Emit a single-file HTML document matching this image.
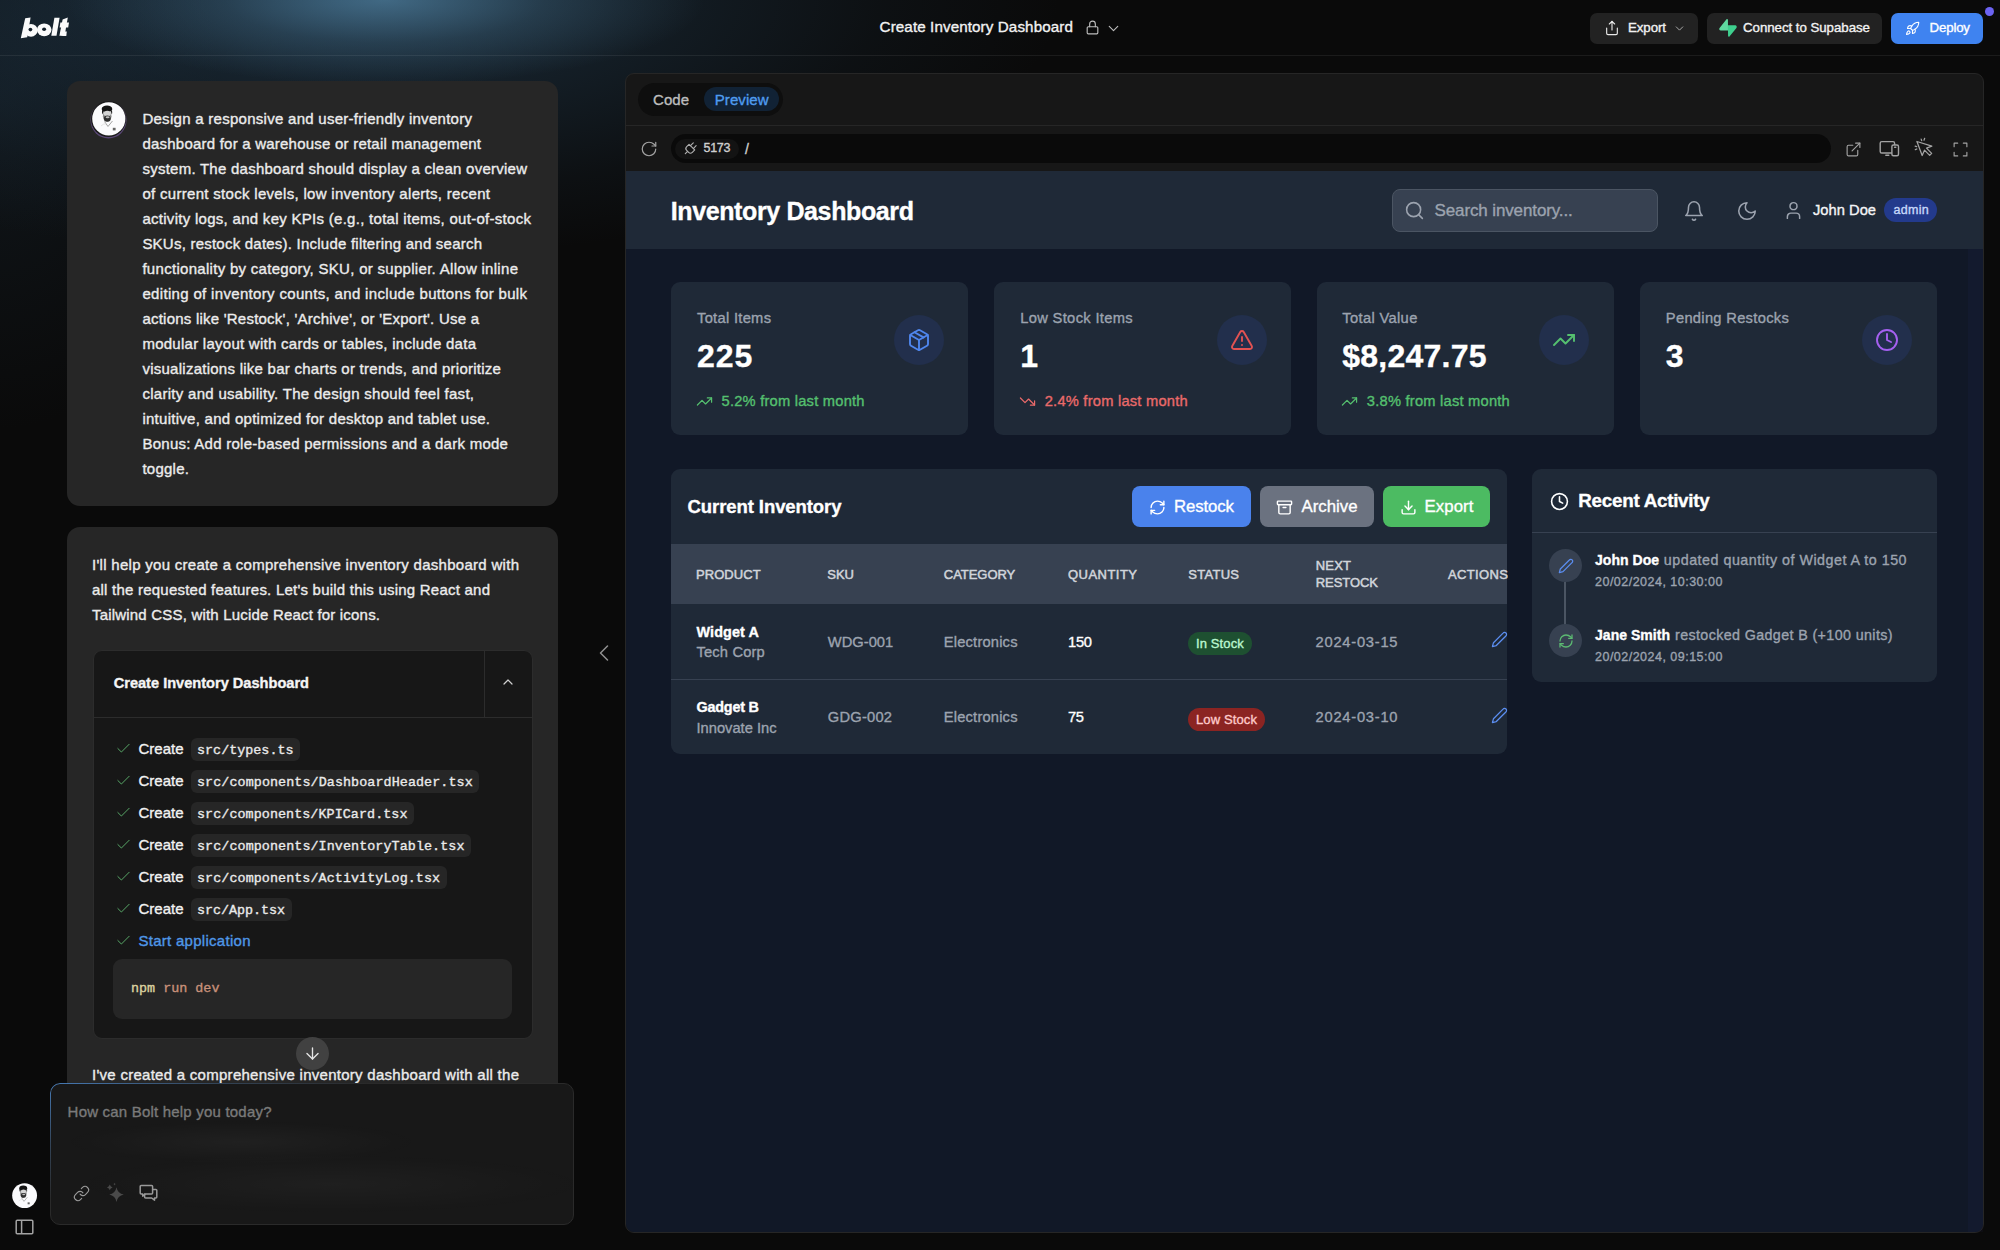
<!DOCTYPE html>
<html><head><meta charset="utf-8">
<title>Create Inventory Dashboard</title>
<style>
*{box-sizing:border-box;margin:0;padding:0}
html,body{width:2000px;height:1250px;overflow:hidden}
body{background:#0a0a0a;font-family:"Liberation Sans",sans-serif;color:#fff;position:relative}
.bx{position:absolute}
.t{position:absolute;line-height:1;white-space:pre}
.ic{position:absolute;overflow:visible}
#glow{position:absolute;left:0;top:0;width:2000px;height:1250px;
 background:
  radial-gradient(ellipse 320px 85px at 385px 0px, rgba(90,145,180,0.6), rgba(90,145,180,0.22) 50%, rgba(90,145,180,0) 100%),
  radial-gradient(ellipse 720px 260px at 340px 0px, rgba(40,72,98,0.6), rgba(40,72,98,0.32) 40%, rgba(40,72,98,0.1) 75%, rgba(40,72,98,0) 100%),
  radial-gradient(ellipse 220px 330px at 0px 100px, rgba(30,50,66,0.3), rgba(30,50,66,0) 100%);}
.t{-webkit-text-stroke:0.35px currentColor}
</style></head><body>
<div id="glow"></div>
<div class="bx" style="left:0px;top:55px;width:2000px;height:1px;background:rgba(255,255,255,0.07)"></div>
<div class="bx" style="left:1590px;top:12.5px;width:108px;height:31.0px;background:#222222;border-radius:7px"></div>
<div class="bx" style="left:1707px;top:12.5px;width:175.29999999999995px;height:31.0px;background:#222222;border-radius:7px"></div>
<div class="bx" style="left:1891px;top:12.5px;width:92px;height:31.0px;background:#3f83f0;border-radius:7px"></div>
<div class="bx" style="left:1984.5px;top:6.5px;width:9.0px;height:9.0px;background:#6c63f2;border-radius:50%"></div>
<div class="bx" style="left:66.5px;top:81px;width:491.5px;height:425px;background:#262626;border-radius:13px"></div>
<div class="bx" style="left:91px;top:101px;width:35px;height:35.5px;border-radius:50%;background:#1a1a1a;box-shadow:0 1px 0 0.5px rgba(150,110,210,0.45)"></div>
<div class="bx" style="left:66.5px;top:527px;width:491.5px;height:633px;background:#262626;border-radius:13px"></div>
<div class="bx" style="left:92.5px;top:650px;width:440.5px;height:388.5px;background:#171717;border:1px solid #2c2c2c;border-radius:9px"></div>
<div class="bx" style="left:93.5px;top:716.5px;width:438.5px;height:1.0px;background:#2c2c2c"></div>
<div class="bx" style="left:484px;top:651px;width:1px;height:65.5px;background:#2c2c2c"></div>
<div class="bx" style="left:191px;top:737.5px;width:109px;height:23.0px;background:#262626;border-radius:6px"></div>
<div class="bx" style="left:191px;top:769.5px;width:288.2px;height:23.0px;background:#262626;border-radius:6px"></div>
<div class="bx" style="left:191px;top:801.5px;width:223px;height:23.0px;background:#262626;border-radius:6px"></div>
<div class="bx" style="left:191px;top:833.5px;width:280px;height:23.0px;background:#262626;border-radius:6px"></div>
<div class="bx" style="left:191px;top:865.5px;width:255.60000000000002px;height:23.0px;background:#262626;border-radius:6px"></div>
<div class="bx" style="left:191px;top:897.5px;width:100.60000000000002px;height:23.0px;background:#262626;border-radius:6px"></div>
<div class="bx" style="left:113.2px;top:959.3px;width:398.7px;height:59.30000000000007px;background:#262626;border-radius:9px"></div>
<div class="bx" style="left:296px;top:1037px;width:33px;height:33px;background:#414141;border-radius:50%;z-index:3"></div>
<div class="bx" style="left:50.2px;top:1083px;width:524.1999999999999px;height:141.5999999999999px;background:#181818;border:1px solid #2a2a2a;border-radius:10px;z-index:5;overflow:hidden"></div>
<div class="bx" style="left:51px;top:1084px;width:522px;height:140px;z-index:5;border-radius:10px;background:radial-gradient(ellipse 180px 22px at 190px 58px, rgba(255,255,255,0.035), transparent), radial-gradient(ellipse 260px 30px at 280px 100px, rgba(255,255,255,0.03), transparent)"></div>
<div class="bx" style="left:50.2px;top:1083px;width:524.1999999999999px;height:141.5999999999999px;z-index:6;border-radius:10px;border:1px solid transparent;background:linear-gradient(160deg, rgba(80,150,230,0.75), rgba(80,150,230,0.25) 18%, rgba(80,150,230,0) 35%) border-box;-webkit-mask:linear-gradient(#000 0 0) padding-box, linear-gradient(#000 0 0);-webkit-mask-composite:xor;mask-composite:exclude"></div>
<div class="bx" style="left:625px;top:73px;width:1359px;height:1160px;background:#171717;border:1px solid #262626;border-radius:9px"></div>
<div class="bx" style="left:626px;top:125px;width:1357px;height:1px;background:#262626"></div>
<div class="bx" style="left:638.4px;top:82.7px;width:144.89999999999998px;height:32.89999999999999px;background:#0e0e0e;border-radius:17px"></div>
<div class="bx" style="left:704.3px;top:86.9px;width:75.20000000000005px;height:24.5px;background:#112235;border-radius:13px"></div>
<div class="bx" style="left:670.7px;top:134px;width:1160.3px;height:28.5px;background:#0a0a0a;border-radius:15px"></div>
<div class="bx" style="left:674.5px;top:138.7px;width:64.0px;height:20.0px;background:#131313;border-radius:10px"></div>
<div class="bx" style="left:626px;top:171.3px;width:1357px;height:1060.7px;background:#111827;border-radius:0 0 8px 8px"></div>
<div class="bx" style="left:1968px;top:248.6px;width:14.5px;height:983.4px;background:rgba(60,50,140,0.07)"></div>
<div class="bx" style="left:626px;top:171.3px;width:1357px;height:77.29999999999998px;background:#1f2937"></div>
<div class="bx" style="left:1391.8px;top:189.2px;width:266.20000000000005px;height:42.60000000000002px;background:#374151;border:1px solid #4b5563;border-radius:8px"></div>
<div class="bx" style="left:1884.2px;top:198.3px;width:52.899999999999864px;height:24.19999999999999px;background:#233a8c;border-radius:12px"></div>
<div class="bx" style="left:671.2px;top:282.2px;width:297.0px;height:153.2px;background:#1f2937;border-radius:9px"></div>
<div class="bx" style="left:893.6px;top:314.8px;width:50.0px;height:50.0px;background:#222f4c;border-radius:50%"></div>
<div class="bx" style="left:994.4px;top:282.2px;width:296.6px;height:153.2px;background:#1f2937;border-radius:9px"></div>
<div class="bx" style="left:1216.8px;top:314.8px;width:50.0px;height:50.0px;background:#222f4c;border-radius:50%"></div>
<div class="bx" style="left:1316.5px;top:282.2px;width:297.70000000000005px;height:153.2px;background:#1f2937;border-radius:9px"></div>
<div class="bx" style="left:1538.9px;top:314.8px;width:50.0px;height:50.0px;background:#222f4c;border-radius:50%"></div>
<div class="bx" style="left:1640px;top:282.2px;width:297px;height:153.2px;background:#1f2937;border-radius:9px"></div>
<div class="bx" style="left:1862.4px;top:314.8px;width:50.0px;height:50.0px;background:#222f4c;border-radius:50%"></div>
<div class="bx" style="left:671px;top:469.2px;width:835.8px;height:284.8px;background:#1f2937;border-radius:9px;overflow:hidden"></div>
<div class="bx" style="left:1131.9px;top:486.2px;width:119.29999999999995px;height:41.099999999999966px;background:#4a82ec;border-radius:8px"></div>
<div class="bx" style="left:1260px;top:486.2px;width:114px;height:41.099999999999966px;background:#6b7280;border-radius:8px"></div>
<div class="bx" style="left:1382.9px;top:486.2px;width:107.09999999999991px;height:41.099999999999966px;background:#4cbb62;border-radius:8px"></div>
<div class="bx" style="left:671px;top:544.3px;width:835.8px;height:59.700000000000045px;background:#374151"></div>
<div class="bx" style="left:671px;top:679px;width:835.8px;height:1px;background:#374151"></div>
<div class="bx" style="left:1188px;top:631.9px;width:63.799999999999955px;height:23.100000000000023px;background:#1e5031;border-radius:12px"></div>
<div class="bx" style="left:1188px;top:707.5px;width:77px;height:23.100000000000023px;background:#8b2422;border-radius:12px"></div>
<div class="bx" style="left:1532.1px;top:469.2px;width:405.3000000000002px;height:213.00000000000006px;background:#1f2937;border-radius:9px"></div>
<div class="bx" style="left:1532.1px;top:531.5px;width:405.3000000000002px;height:1.0px;background:#374151"></div>
<div class="bx" style="left:1564px;top:582px;width:2.2000000000000455px;height:43px;background:#4b5563"></div>
<div class="bx" style="left:1548.6px;top:549.1px;width:33.0px;height:33.0px;background:#374151;border-radius:50%"></div>
<div class="bx" style="left:1548.6px;top:624.4px;width:33.0px;height:33.0px;background:#374151;border-radius:50%"></div>
<div class="t" style="left:879.6px;top:19.43px;font-size:15.2px;color:#f2f2f2;letter-spacing:0.1px;">Create Inventory Dashboard</div>
<div class="t" style="left:1628px;top:20.74px;font-size:13.3px;color:#f2f2f2;letter-spacing:-0.087px;">Export</div>
<div class="t" style="left:1743px;top:20.74px;font-size:13.3px;color:#f2f2f2;letter-spacing:-0.05px;">Connect to Supabase</div>
<div class="t" style="left:1929.6px;top:20.74px;font-size:13.3px;color:#ffffff;letter-spacing:-0.198px;">Deploy</div>
<div class="t" style="left:142.4px;top:110.9px;font-size:15px;color:#ececec;letter-spacing:0.277px;">Design a responsive and user-friendly inventory</div>
<div class="t" style="left:142.4px;top:135.9px;font-size:15px;color:#ececec;letter-spacing:0.224px;">dashboard for a warehouse or retail management</div>
<div class="t" style="left:142.4px;top:160.9px;font-size:15px;color:#ececec;letter-spacing:0.25px;">system. The dashboard should display a clean overview</div>
<div class="t" style="left:142.4px;top:185.9px;font-size:15px;color:#ececec;letter-spacing:0.304px;">of current stock levels, low inventory alerts, recent</div>
<div class="t" style="left:142.4px;top:210.9px;font-size:15px;color:#ececec;letter-spacing:0.284px;">activity logs, and key KPIs (e.g., total items, out-of-stock</div>
<div class="t" style="left:142.4px;top:235.9px;font-size:15px;color:#ececec;letter-spacing:0.227px;">SKUs, restock dates). Include filtering and search</div>
<div class="t" style="left:142.4px;top:260.9px;font-size:15px;color:#ececec;letter-spacing:0.295px;">functionality by category, SKU, or supplier. Allow inline</div>
<div class="t" style="left:142.4px;top:285.9px;font-size:15px;color:#ececec;letter-spacing:0.331px;">editing of inventory counts, and include buttons for bulk</div>
<div class="t" style="left:142.4px;top:310.9px;font-size:15px;color:#ececec;letter-spacing:0.227px;">actions like &#x27;Restock&#x27;, &#x27;Archive&#x27;, or &#x27;Export&#x27;. Use a</div>
<div class="t" style="left:142.4px;top:335.9px;font-size:15px;color:#ececec;letter-spacing:0.262px;">modular layout with cards or tables, include data</div>
<div class="t" style="left:142.4px;top:360.9px;font-size:15px;color:#ececec;letter-spacing:0.259px;">visualizations like bar charts or trends, and prioritize</div>
<div class="t" style="left:142.4px;top:385.9px;font-size:15px;color:#ececec;letter-spacing:0.29px;">clarity and usability. The design should feel fast,</div>
<div class="t" style="left:142.4px;top:410.9px;font-size:15px;color:#ececec;letter-spacing:0.276px;">intuitive, and optimized for desktop and tablet use.</div>
<div class="t" style="left:142.4px;top:435.9px;font-size:15px;color:#ececec;letter-spacing:0.268px;">Bonus: Add role-based permissions and a dark mode</div>
<div class="t" style="left:142.4px;top:460.9px;font-size:15px;color:#ececec;letter-spacing:0.259px;">toggle.</div>
<div class="t" style="left:92px;top:556.6px;font-size:15px;color:#ececec;letter-spacing:0.287px;">I&#x27;ll help you create a comprehensive inventory dashboard with</div>
<div class="t" style="left:92px;top:581.6px;font-size:15px;color:#ececec;letter-spacing:0.224px;">all the requested features. Let&#x27;s build this using React and</div>
<div class="t" style="left:92px;top:606.6px;font-size:15px;color:#ececec;letter-spacing:0.192px;">Tailwind CSS, with Lucide React for icons.</div>
<div class="t" style="left:113.7px;top:675.64px;font-size:14.6px;color:#f5f5f5;font-weight:700;letter-spacing:-0.006px;">Create Inventory Dashboard</div>
<div class="t" style="left:138.5px;top:741.3px;font-size:15px;color:#f2f2f2;letter-spacing:-0.006px;">Create</div>
<div class="t" style="left:197px;top:743.53px;font-size:13.4px;color:#eaeaea;font-family:'Liberation Mono',monospace;letter-spacing:0.006px;">src/types.ts</div>
<div class="t" style="left:138.5px;top:773.3px;font-size:15px;color:#f2f2f2;letter-spacing:-0.006px;">Create</div>
<div class="t" style="left:197px;top:775.53px;font-size:13.4px;color:#eaeaea;font-family:'Liberation Mono',monospace;letter-spacing:0.075px;">src/components/DashboardHeader.tsx</div>
<div class="t" style="left:138.5px;top:805.3px;font-size:15px;color:#f2f2f2;letter-spacing:-0.006px;">Create</div>
<div class="t" style="left:197px;top:807.53px;font-size:13.4px;color:#eaeaea;font-family:'Liberation Mono',monospace;letter-spacing:0.062px;">src/components/KPICard.tsx</div>
<div class="t" style="left:138.5px;top:837.3px;font-size:15px;color:#f2f2f2;letter-spacing:-0.006px;">Create</div>
<div class="t" style="left:197px;top:839.53px;font-size:13.4px;color:#eaeaea;font-family:'Liberation Mono',monospace;letter-spacing:0.072px;">src/components/InventoryTable.tsx</div>
<div class="t" style="left:138.5px;top:869.3px;font-size:15px;color:#f2f2f2;letter-spacing:-0.006px;">Create</div>
<div class="t" style="left:197px;top:871.53px;font-size:13.4px;color:#eaeaea;font-family:'Liberation Mono',monospace;letter-spacing:0.07px;">src/components/ActivityLog.tsx</div>
<div class="t" style="left:138.5px;top:901.3px;font-size:15px;color:#f2f2f2;letter-spacing:-0.006px;">Create</div>
<div class="t" style="left:197px;top:903.53px;font-size:13.4px;color:#eaeaea;font-family:'Liberation Mono',monospace;letter-spacing:-0.031px;">src/App.tsx</div>
<div class="t" style="left:138.5px;top:933.3px;font-size:15px;color:#4f97e8;letter-spacing:0.276px;">Start application</div>
<div class="t" style="left:130.9px;top:982.33px;font-size:13.4px;color:#dcd3a0;font-family:'Liberation Mono',monospace;">npm</div>
<div class="t" style="left:163.2px;top:982.33px;font-size:13.4px;color:#c8917a;font-family:'Liberation Mono',monospace;">run dev</div>
<div class="t" style="left:92px;top:1066.9px;font-size:15px;color:#ececec;letter-spacing:0.273px;">I&#x27;ve created a comprehensive inventory dashboard with all the</div>
<div class="t" style="left:67.6px;top:1103.6px;font-size:15px;color:#7a7a7a;letter-spacing:0.201px;z-index:6;">How can Bolt help you today?</div>
<div class="t" style="left:653px;top:91.5px;font-size:15px;color:#bdbdbd;letter-spacing:0.047px;">Code</div>
<div class="t" style="left:714.8px;top:91.5px;font-size:15px;color:#4f9cf0;letter-spacing:0.073px;">Preview</div>
<div class="t" style="left:703.5px;top:142.42px;font-size:12.5px;color:#cfcfcf;letter-spacing:-0.304px;">5173</div>
<div class="t" style="left:745px;top:142.15px;font-size:14px;color:#cfcfcf;">/</div>
<div class="t" style="left:670.7px;top:198.84px;font-size:25px;color:#ffffff;font-weight:700;letter-spacing:-0.376px;">Inventory Dashboard</div>
<div class="t" style="left:1434.5px;top:202.41px;font-size:17px;color:#9ca3af;letter-spacing:-0.121px;">Search inventory...</div>
<div class="t" style="left:1813px;top:203.36px;font-size:14.7px;color:#f3f4f6;letter-spacing:0.018px;">John Doe</div>
<div class="t" style="left:1893.6px;top:204.02px;font-size:12.5px;color:#c7d8fb;letter-spacing:0.263px;">admin</div>
<div class="t" style="left:697.0px;top:310.56px;font-size:14.7px;color:#9ca3af;letter-spacing:0.298px;">Total Items</div>
<div class="t" style="left:697.0px;top:339.91px;font-size:32px;color:#ffffff;font-weight:700;letter-spacing:0.905px;">225</div>
<div class="t" style="left:721.5px;top:393.56px;font-size:14.7px;color:#55c06f;letter-spacing:0.222px;">5.2% from last month</div>
<div class="t" style="left:1020.1999999999999px;top:310.56px;font-size:14.7px;color:#9ca3af;letter-spacing:0.339px;">Low Stock Items</div>
<div class="t" style="left:1020.1999999999999px;top:339.91px;font-size:32px;color:#ffffff;font-weight:700;">1</div>
<div class="t" style="left:1044.6999999999998px;top:393.56px;font-size:14.7px;color:#ea6a6a;letter-spacing:0.222px;">2.4% from last month</div>
<div class="t" style="left:1342.3px;top:310.56px;font-size:14.7px;color:#9ca3af;letter-spacing:0.342px;">Total Value</div>
<div class="t" style="left:1342.3px;top:339.91px;font-size:32px;color:#ffffff;font-weight:700;letter-spacing:0.23px;">$8,247.75</div>
<div class="t" style="left:1366.8px;top:393.56px;font-size:14.7px;color:#55c06f;letter-spacing:0.222px;">3.8% from last month</div>
<div class="t" style="left:1665.8px;top:310.56px;font-size:14.7px;color:#9ca3af;letter-spacing:0.307px;">Pending Restocks</div>
<div class="t" style="left:1665.8px;top:339.91px;font-size:32px;color:#ffffff;font-weight:700;">3</div>
<div class="t" style="left:687.5px;top:498.24px;font-size:18.5px;color:#ffffff;font-weight:700;letter-spacing:-0.076px;">Current Inventory</div>
<div class="t" style="left:1174px;top:498.78px;font-size:16.8px;color:#ffffff;letter-spacing:-0.104px;">Restock</div>
<div class="t" style="left:1301.6px;top:498.78px;font-size:16.8px;color:#ffffff;letter-spacing:-0.011px;">Archive</div>
<div class="t" style="left:1424.4px;top:498.78px;font-size:16.8px;color:#ffffff;letter-spacing:0.117px;">Export</div>
<div class="t" style="left:695.9px;top:567.8px;font-size:13px;color:#d1d5db;letter-spacing:0.103px;-webkit-text-stroke:0.5px currentColor;">PRODUCT</div>
<div class="t" style="left:827.2px;top:567.8px;font-size:13px;color:#d1d5db;letter-spacing:0.033px;-webkit-text-stroke:0.5px currentColor;">SKU</div>
<div class="t" style="left:943.8px;top:567.8px;font-size:13px;color:#d1d5db;letter-spacing:-0.038px;-webkit-text-stroke:0.5px currentColor;">CATEGORY</div>
<div class="t" style="left:1068px;top:567.8px;font-size:13px;color:#d1d5db;letter-spacing:0.467px;-webkit-text-stroke:0.5px currentColor;">QUANTITY</div>
<div class="t" style="left:1188.2px;top:567.8px;font-size:13px;color:#d1d5db;letter-spacing:0.288px;-webkit-text-stroke:0.5px currentColor;">STATUS</div>
<div class="t" style="left:1315.7px;top:559.3px;font-size:13px;color:#d1d5db;letter-spacing:0.209px;-webkit-text-stroke:0.5px currentColor;">NEXT</div>
<div class="t" style="left:1315.7px;top:576.2px;font-size:13px;color:#d1d5db;letter-spacing:-0.052px;-webkit-text-stroke:0.5px currentColor;">RESTOCK</div>
<div class="t" style="left:1448px;top:567.8px;font-size:13px;color:#d1d5db;letter-spacing:0.367px;-webkit-text-stroke:0.5px currentColor;clip-path:inset(-5px 0 -5px -5px);">ACTIONS</div>
<div class="t" style="left:696.5px;top:624.61px;font-size:14.4px;color:#ffffff;font-weight:700;letter-spacing:0.087px;">Widget A</div>
<div class="t" style="left:696.5px;top:645.06px;font-size:14.7px;color:#9ca3af;letter-spacing:0.168px;">Tech Corp</div>
<div class="t" style="left:827.8px;top:634.76px;font-size:14.7px;color:#9ca3af;letter-spacing:0.017px;">WDG-001</div>
<div class="t" style="left:943.8px;top:634.76px;font-size:14.7px;color:#9ca3af;letter-spacing:0.186px;">Electronics</div>
<div class="t" style="left:1068px;top:634.76px;font-size:14.7px;color:#ffffff;letter-spacing:-0.258px;">150</div>
<div class="t" style="left:1196px;top:637.0px;font-size:13px;color:#bbf7d0;letter-spacing:0.119px;">In Stock</div>
<div class="t" style="left:1315.6px;top:634.76px;font-size:14.7px;color:#9ca3af;letter-spacing:0.751px;">2024-03-15</div>
<div class="t" style="left:696.5px;top:700.21px;font-size:14.4px;color:#ffffff;font-weight:700;letter-spacing:-0.21px;">Gadget B</div>
<div class="t" style="left:696.5px;top:720.66px;font-size:14.7px;color:#9ca3af;letter-spacing:-0.003px;">Innovate Inc</div>
<div class="t" style="left:827.8px;top:710.36px;font-size:14.7px;color:#9ca3af;letter-spacing:0.223px;">GDG-002</div>
<div class="t" style="left:943.8px;top:710.36px;font-size:14.7px;color:#9ca3af;letter-spacing:0.186px;">Electronics</div>
<div class="t" style="left:1068px;top:710.36px;font-size:14.7px;color:#ffffff;letter-spacing:-0.344px;">75</div>
<div class="t" style="left:1196px;top:712.6px;font-size:13px;color:#fecaca;letter-spacing:0.127px;">Low Stock</div>
<div class="t" style="left:1315.6px;top:710.36px;font-size:14.7px;color:#9ca3af;letter-spacing:0.751px;">2024-03-10</div>
<div class="t" style="left:1578.3px;top:492.09px;font-size:18.8px;color:#ffffff;font-weight:700;letter-spacing:-0.257px;">Recent Activity</div>
<div class="t" style="left:1595px;top:553.15px;font-size:14px;color:#ffffff;font-weight:700;letter-spacing:0.031px;">John Doe</div>
<div class="t" style="left:1663.8px;top:552.9px;font-size:14.3px;color:#9ca3af;letter-spacing:0.501px;">updated quantity of Widget A to 150</div>
<div class="t" style="left:1595px;top:575.92px;font-size:12.5px;color:#9ca3af;letter-spacing:0.486px;">20/02/2024, 10:30:00</div>
<div class="t" style="left:1595px;top:628.15px;font-size:14px;color:#ffffff;font-weight:700;letter-spacing:0.033px;">Jane Smith</div>
<div class="t" style="left:1675px;top:627.9px;font-size:14.3px;color:#9ca3af;letter-spacing:0.376px;">restocked Gadget B (+100 units)</div>
<div class="t" style="left:1595px;top:650.92px;font-size:12.5px;color:#9ca3af;letter-spacing:0.486px;">20/02/2024, 09:15:00</div>
<svg class="ic" style="left:0;top:0;width:100px;height:56px" viewBox="0 0 100 56"><g fill="#fafafa"><polygon points="25.2,18.2 30.6,17.6 27.2,37.2 20.8,38.2"/><ellipse cx="31" cy="30.3" rx="6.6" ry="6.4"/><ellipse cx="44.2" cy="29.8" rx="7.3" ry="6.4"/><polygon points="54.4,17.8 59.6,17.8 56.5,35.8 51.3,35.8"/><polygon points="62.6,19.6 67.8,17.4 64.6,35.8 59.4,35.8"/><polygon points="60.4,22.6 69,22.6 68.2,27.4 59.6,27.4"/><path d="M60 33 Q60 36 64 36 L66.3 36 L66.8 31.5 L62 31.5 Z"/></g><g fill="#14202a"><ellipse cx="30.4" cy="29.6" rx="1.9" ry="1.8"/><ellipse cx="44.1" cy="29.3" rx="2" ry="1.8"/></g></svg>
<svg class="ic" style="left:1083.5px;top:19px;width:17px;height:17px;" viewBox="0 0 24 24" fill="none" stroke="#bdbdbd" stroke-width="1.6" stroke-linecap="round" stroke-linejoin="round"><path d="M6 11h12a1.5 1.5 0 0 1 1.5 1.5v7A1.5 1.5 0 0 1 18 21H6a1.5 1.5 0 0 1-1.5-1.5v-7A1.5 1.5 0 0 1 6 11z"/><path d="M8 11V7a4 4 0 0 1 8 0v4"/></svg>
<svg class="ic" style="left:1104.5px;top:20px;width:17px;height:17px;" viewBox="0 0 24 24" fill="none" stroke="#bdbdbd" stroke-width="1.6" stroke-linecap="round" stroke-linejoin="round"><path d="m6 9 6 6 6-6"/></svg>
<svg class="ic" style="left:1603.5px;top:19.5px;width:16px;height:16px;" viewBox="0 0 24 24" fill="none" stroke="#e8e8e8" stroke-width="1.7" stroke-linecap="round" stroke-linejoin="round"><path d="M4 12v8a2 2 0 0 0 2 2h12a2 2 0 0 0 2-2v-8"/><polyline points="16 6 12 2 8 6"/><line x1="12" x2="12" y1="2" y2="15"/></svg>
<svg class="ic" style="left:1673px;top:22px;width:13px;height:13px;" viewBox="0 0 24 24" fill="none" stroke="#bdbdbd" stroke-width="1.6" stroke-linecap="round" stroke-linejoin="round"><path d="m6 9 6 6 6-6"/></svg>
<svg class="ic" style="left:1719px;top:19px;width:18px;height:18px" viewBox="0 0 109 113"><path d="M63.7 110.3c-2.9 3.6-8.7 1.6-8.8-3l-1-67.3h45.8c8.3 0 12.9 9.6 7.7 16L63.7 110.3z" fill="#3ecf8e"/><path d="M45.3 2.1c2.9-3.6 8.7-1.6 8.8 3l.4 67.3H9.3c-8.3 0-12.9-9.6-7.7-16L45.3 2.1z" fill="#5fd9a0"/></svg>
<svg class="ic" style="left:1904.5px;top:20.5px;width:15px;height:15px;" viewBox="0 0 24 24" fill="none" stroke="#ffffff" stroke-width="1.8" stroke-linecap="round" stroke-linejoin="round"><path d="M4.5 16.5c-1.5 1.26-2 5-2 5s3.74-.5 5-2c.71-.84.7-2.13-.09-2.91a2.18 2.18 0 0 0-2.91-.09z"/><path d="m12 15-3-3a22 22 0 0 1 2-3.95A12.88 12.88 0 0 1 22 2c0 2.72-.78 7.5-6 11a22.35 22.35 0 0 1-4 2z"/><path d="M9 12H4s.55-3.03 2-4c1.62-1.08 5 0 5 0"/><path d="M12 15v5s3.03-.55 4-2c1.08-1.62 0-5 0-5"/></svg>
<svg class="ic" style="left:91.7px;top:101.9px;width:33.6px;height:33.6px" viewBox="0 0 33.6 33.6"><circle cx="16.8" cy="16.8" r="16.6" fill="#fbfbfd"/><ellipse cx="15.2" cy="14.2" rx="4.3" ry="5.4" fill="#8a8a8a"/><ellipse cx="15.0" cy="6.9" rx="5.3" ry="3.4" fill="#141414"/><path d="M10 7.5 Q9.6 11 11 12.5 L11.6 9.5Z" fill="#141414"/><path d="M20 7.5 Q20.6 11 19.6 12.5 L19 9.5Z" fill="#141414"/><ellipse cx="15.3" cy="11.4" rx="3.6" ry="2.6" fill="#d4d4d4"/><ellipse cx="15.3" cy="16.6" rx="3.4" ry="3.2" fill="#2e2e2e"/><ellipse cx="15.6" cy="15.2" rx="2" ry="1" fill="#bdbdbd"/><path d="M12.5 19.5 L16 24.5 L20.5 19" fill="none" stroke="#9a9a9a" stroke-width="0.9"/><path d="M9 24 Q12 21 14 22" fill="none" stroke="#dddddd" stroke-width="0.8"/><rect x="20.8" y="25.8" width="2.8" height="2.6" fill="#666"/></svg>
<svg class="ic" style="left:500px;top:674px;width:16px;height:16px;" viewBox="0 0 24 24" fill="none" stroke="#d0d0d0" stroke-width="1.8" stroke-linecap="round" stroke-linejoin="round"><path d="m18 15-6-6-6 6"/></svg>
<svg class="ic" style="left:114.5px;top:740px;width:17px;height:17px;" viewBox="0 0 24 24" fill="none" stroke="#58a868" stroke-width="1.4" stroke-linecap="round" stroke-linejoin="round"><path d="M20 6 9 17l-5-5"/></svg>
<svg class="ic" style="left:114.5px;top:772px;width:17px;height:17px;" viewBox="0 0 24 24" fill="none" stroke="#58a868" stroke-width="1.4" stroke-linecap="round" stroke-linejoin="round"><path d="M20 6 9 17l-5-5"/></svg>
<svg class="ic" style="left:114.5px;top:804px;width:17px;height:17px;" viewBox="0 0 24 24" fill="none" stroke="#58a868" stroke-width="1.4" stroke-linecap="round" stroke-linejoin="round"><path d="M20 6 9 17l-5-5"/></svg>
<svg class="ic" style="left:114.5px;top:836px;width:17px;height:17px;" viewBox="0 0 24 24" fill="none" stroke="#58a868" stroke-width="1.4" stroke-linecap="round" stroke-linejoin="round"><path d="M20 6 9 17l-5-5"/></svg>
<svg class="ic" style="left:114.5px;top:868px;width:17px;height:17px;" viewBox="0 0 24 24" fill="none" stroke="#58a868" stroke-width="1.4" stroke-linecap="round" stroke-linejoin="round"><path d="M20 6 9 17l-5-5"/></svg>
<svg class="ic" style="left:114.5px;top:900px;width:17px;height:17px;" viewBox="0 0 24 24" fill="none" stroke="#58a868" stroke-width="1.4" stroke-linecap="round" stroke-linejoin="round"><path d="M20 6 9 17l-5-5"/></svg>
<svg class="ic" style="left:114.5px;top:932px;width:17px;height:17px;" viewBox="0 0 24 24" fill="none" stroke="#58a868" stroke-width="1.4" stroke-linecap="round" stroke-linejoin="round"><path d="M20 6 9 17l-5-5"/></svg>
<svg class="ic" style="left:303px;top:1044px;width:19px;height:19px;z-index:4" viewBox="0 0 24 24" fill="none" stroke="#e5e5e5" stroke-width="1.7" stroke-linecap="round" stroke-linejoin="round"><path d="M12 5v14"/><path d="m19 12-7 7-7-7"/></svg>
<svg class="ic" style="left:72.5px;top:1184.5px;width:17px;height:17px;z-index:6" viewBox="0 0 24 24" fill="none" stroke="#9a9a9a" stroke-width="1.6" stroke-linecap="round" stroke-linejoin="round"><path d="M10 13a5 5 0 0 0 7.54.54l3-3a5 5 0 0 0-7.07-7.07l-1.72 1.71"/><path d="M14 11a5 5 0 0 0-7.54-.54l-3 3a5 5 0 0 0 7.07 7.07l1.71-1.71"/></svg>
<svg class="ic" style="left:103px;top:1181px;width:24px;height:24px;z-index:6" viewBox="0 0 24 24"><path d="M13.5 6.2 Q14.6 12.4 20.8 13.6 Q14.6 14.8 13.5 21 Q12.4 14.8 6.2 13.6 Q12.4 12.4 13.5 6.2Z" fill="#4a4a4a"/><path d="M6.8 3.6 Q7.3 5.9 9.6 6.4 Q7.3 6.9 6.8 9.2 Q6.3 6.9 4 6.4 Q6.3 5.9 6.8 3.6Z" fill="#4a4a4a"/><path d="M11.6 1.8 Q11.8 2.9 12.9 3.1 Q11.8 3.3 11.6 4.4 Q11.4 3.3 10.3 3.1 Q11.4 2.9 11.6 1.8Z" fill="#4a4a4a"/></svg>
<svg class="ic" style="left:138px;top:1182px;width:22px;height:22px;z-index:6" viewBox="0 0 22 22" fill="none" stroke="#9a9a9a" stroke-width="1.5" stroke-linejoin="round" stroke-linecap="round"><path d="M3.2 3.5h10.4a1 1 0 0 1 1 1v6.4a1 1 0 0 1-1 1H7.5l-2.8 2.2V11.9H3.2a1 1 0 0 1-1-1V4.5a1 1 0 0 1 1-1z"/><path d="M14.6 7.4h3.2a1 1 0 0 1 1 1v6.6a1 1 0 0 1-1 1h-1.3v2.2l-2.8-2.2H7.6a1 1 0 0 1-1-1v-3"/></svg>
<svg class="ic" style="left:11.6px;top:1182.8px;width:25.2px;height:25.2px" viewBox="0 0 33.6 33.6"><circle cx="16.8" cy="16.8" r="16.6" fill="#fbfbfd"/><ellipse cx="15.2" cy="14.2" rx="4.3" ry="5.4" fill="#8a8a8a"/><ellipse cx="15.0" cy="6.9" rx="5.3" ry="3.4" fill="#141414"/><path d="M10 7.5 Q9.6 11 11 12.5 L11.6 9.5Z" fill="#141414"/><path d="M20 7.5 Q20.6 11 19.6 12.5 L19 9.5Z" fill="#141414"/><ellipse cx="15.3" cy="11.4" rx="3.6" ry="2.6" fill="#d4d4d4"/><ellipse cx="15.3" cy="16.6" rx="3.4" ry="3.2" fill="#2e2e2e"/><ellipse cx="15.6" cy="15.2" rx="2" ry="1" fill="#bdbdbd"/><path d="M12.5 19.5 L16 24.5 L20.5 19" fill="none" stroke="#9a9a9a" stroke-width="0.9"/><path d="M9 24 Q12 21 14 22" fill="none" stroke="#dddddd" stroke-width="0.8"/><rect x="20.8" y="25.8" width="2.8" height="2.6" fill="#666"/></svg>
<svg class="ic" style="left:14px;top:1217px;width:22px;height:20px" viewBox="0 0 22 20" fill="none" stroke="#a3a3a3" stroke-width="1.5"><rect x="2.2" y="3.2" width="16.6" height="13.6" rx="1"/><path d="M7.6 3.2v13.6"/></svg>
<svg class="ic" style="left:589.5px;top:638.5px;width:28px;height:28px;" viewBox="0 0 24 24" fill="none" stroke="#8f8f8f" stroke-width="1.3" stroke-linecap="round" stroke-linejoin="round"><path d="m15 18-6-6 6-6"/></svg>
<svg class="ic" style="left:639.5px;top:139.5px;width:18px;height:18px;" viewBox="0 0 24 24" fill="none" stroke="#a3a3a3" stroke-width="1.6" stroke-linecap="round" stroke-linejoin="round"><path d="M21 12a9 9 0 1 1-9-9c2.52 0 4.93 1 6.74 2.74L21 8"/><path d="M21 3v5h-5"/></svg>
<svg class="ic" style="left:682px;top:140.5px;width:16px;height:16px;" viewBox="0 0 24 24" fill="none" stroke="#b0b0b0" stroke-width="1.7" stroke-linecap="round" stroke-linejoin="round"><g transform="rotate(45 12 12)"><path d="M12 22v-5"/><path d="M9 8V2"/><path d="M15 8V2"/><path d="M18 8v5a4 4 0 0 1-4 4h-4a4 4 0 0 1-4-4V8Z"/></g></svg>
<svg class="ic" style="left:1845px;top:140.5px;width:17px;height:17px;" viewBox="0 0 24 24" fill="none" stroke="#a3a3a3" stroke-width="1.6" stroke-linecap="round" stroke-linejoin="round"><path d="M15 3h6v6"/><path d="M10 14 21 3"/><path d="M18 13v6a2 2 0 0 1-2 2H5a2 2 0 0 1-2-2V8a2 2 0 0 1 2-2h6"/></svg>
<svg class="ic" style="left:1876px;top:136px;width:26px;height:24px" viewBox="0 0 26 24" fill="none" stroke="#a3a3a3" stroke-width="1.4" stroke-linecap="round" stroke-linejoin="round"><rect x="4.2" y="5.6" width="14.4" height="11.4" rx="1.6"/><path d="M9.8 19.2h3"/><rect x="15.9" y="9" width="6.6" height="10.8" rx="1.5" fill="#171717"/><path d="M18.6 11.2h1.2"/></svg>
<svg class="ic" style="left:1914px;top:137px;width:20px;height:20px;" viewBox="0 0 24 24" fill="none" stroke="#a3a3a3" stroke-width="1.5" stroke-linecap="round" stroke-linejoin="round"><path d="M3.5 5.4 9.8 22.2 12.6 15.8 18.8 22 21.2 19.6 15 13.4 21.4 11Z"/><path d="M8.6 2.6 9.2 4.4"/><path d="M12.8 1.6 12 3.8"/><path d="M1.4 11 3.2 11.6"/><path d="M1.6 15.2 3.4 14.4"/></svg>
<svg class="ic" style="left:1951.5px;top:140.5px;width:17px;height:17px;" viewBox="0 0 24 24" fill="none" stroke="#a3a3a3" stroke-width="1.6" stroke-linecap="round" stroke-linejoin="round"><path d="M3 8V3h5"/><path d="M16 3h5v5"/><path d="M21 16v5h-5"/><path d="M8 21H3v-5"/></svg>
<svg class="ic" style="left:1404px;top:199.5px;width:21px;height:21px;" viewBox="0 0 24 24" fill="none" stroke="#9ca3af" stroke-width="1.8" stroke-linecap="round" stroke-linejoin="round"><circle cx="11" cy="11" r="8"/><path d="m21 21-4.3-4.3"/></svg>
<svg class="ic" style="left:1682.5px;top:199.5px;width:22px;height:22px;" viewBox="0 0 24 24" fill="none" stroke="#9ca3af" stroke-width="1.7" stroke-linecap="round" stroke-linejoin="round"><path d="M6 8a6 6 0 0 1 12 0c0 7 3 9 3 9H3s3-2 3-9"/><path d="M10.3 21a1.94 1.94 0 0 0 3.4 0"/></svg>
<svg class="ic" style="left:1736px;top:199.5px;width:22px;height:22px;" viewBox="0 0 24 24" fill="none" stroke="#9ca3af" stroke-width="1.7" stroke-linecap="round" stroke-linejoin="round"><path d="M12 3a6 6 0 0 0 9 9 9 9 0 1 1-9-9Z"/></svg>
<svg class="ic" style="left:1783px;top:199.5px;width:21px;height:21px;" viewBox="0 0 24 24" fill="none" stroke="#9ca3af" stroke-width="1.7" stroke-linecap="round" stroke-linejoin="round"><path d="M19 21v-2a4 4 0 0 0-4-4H9a4 4 0 0 0-4 4v2"/><circle cx="12" cy="7" r="4"/></svg>
<svg class="ic" style="left:696.0px;top:392.5px;width:17px;height:17px;" viewBox="0 0 24 24" fill="none" stroke="#55c06f" stroke-width="1.7" stroke-linecap="round" stroke-linejoin="round"><polyline points="22 7 13.5 15.5 8.5 10.5 2 17"/><polyline points="16 7 22 7 22 13"/></svg>
<svg class="ic" style="left:906.6px;top:327.8px;width:24px;height:24px;" viewBox="0 0 24 24" fill="none" stroke="#4f86ee" stroke-width="1.9" stroke-linecap="round" stroke-linejoin="round"><path d="m7.5 4.27 9 5.15"/><path d="M21 8a2 2 0 0 0-1-1.73l-7-4a2 2 0 0 0-2 0l-7 4A2 2 0 0 0 3 8v8a2 2 0 0 0 1 1.73l7 4a2 2 0 0 0 2 0l7-4A2 2 0 0 0 21 16Z"/><path d="m3.3 7 8.7 5 8.7-5"/><path d="M12 22V12"/></svg>
<svg class="ic" style="left:1019.1999999999999px;top:392.5px;width:17px;height:17px;" viewBox="0 0 24 24" fill="none" stroke="#ea6a6a" stroke-width="1.7" stroke-linecap="round" stroke-linejoin="round"><polyline points="22 17 13.5 8.5 8.5 13.5 2 7"/><polyline points="16 17 22 17 22 11"/></svg>
<svg class="ic" style="left:1229.8px;top:327.8px;width:24px;height:24px;" viewBox="0 0 24 24" fill="none" stroke="#e25252" stroke-width="1.9" stroke-linecap="round" stroke-linejoin="round"><path d="m21.73 18-8-14a2 2 0 0 0-3.48 0l-8 14A2 2 0 0 0 4 21h16a2 2 0 0 0 1.73-3Z"/><path d="M12 9v4"/><path d="M12 17h.01"/></svg>
<svg class="ic" style="left:1341.3px;top:392.5px;width:17px;height:17px;" viewBox="0 0 24 24" fill="none" stroke="#55c06f" stroke-width="1.7" stroke-linecap="round" stroke-linejoin="round"><polyline points="22 7 13.5 15.5 8.5 10.5 2 17"/><polyline points="16 7 22 7 22 13"/></svg>
<svg class="ic" style="left:1551.9px;top:327.8px;width:24px;height:24px;" viewBox="0 0 24 24" fill="none" stroke="#55c06f" stroke-width="1.9" stroke-linecap="round" stroke-linejoin="round"><polyline points="22 7 13.5 15.5 8.5 10.5 2 17"/><polyline points="16 7 22 7 22 13"/></svg>
<svg class="ic" style="left:1875.4px;top:327.8px;width:24px;height:24px;" viewBox="0 0 24 24" fill="none" stroke="#a560f0" stroke-width="1.9" stroke-linecap="round" stroke-linejoin="round"><circle cx="12" cy="12" r="10"/><polyline points="12 6 12 12 16 14"/></svg>
<svg class="ic" style="left:1148.5px;top:499px;width:17px;height:17px;" viewBox="0 0 24 24" fill="none" stroke="#ffffff" stroke-width="2" stroke-linecap="round" stroke-linejoin="round"><path d="M3 12a9 9 0 0 1 9-9 9.75 9.75 0 0 1 6.74 2.74L21 8"/><path d="M21 3v5h-5"/><path d="M21 12a9 9 0 0 1-9 9 9.75 9.75 0 0 1-6.74-2.74L3 16"/><path d="M8 16H3v5"/></svg>
<svg class="ic" style="left:1276.3px;top:499px;width:17px;height:17px;" viewBox="0 0 24 24" fill="none" stroke="#ffffff" stroke-width="2" stroke-linecap="round" stroke-linejoin="round"><rect width="20" height="5" x="2" y="3" rx="1"/><path d="M4 8v11a2 2 0 0 0 2 2h12a2 2 0 0 0 2-2V8"/><path d="M10 12h4"/></svg>
<svg class="ic" style="left:1399.5px;top:499px;width:17px;height:17px;" viewBox="0 0 24 24" fill="none" stroke="#ffffff" stroke-width="2" stroke-linecap="round" stroke-linejoin="round"><path d="M21 15v4a2 2 0 0 1-2 2H5a2 2 0 0 1-2-2v-4"/><polyline points="7 10 12 15 17 10"/><line x1="12" x2="12" y1="15" y2="3"/></svg>
<svg class="ic" style="left:1490.5px;top:631px;width:17px;height:17px;clip-path:inset(-3px 0 -3px -3px);" viewBox="0 0 24 24" fill="none" stroke="#5b8def" stroke-width="1.8" stroke-linecap="round" stroke-linejoin="round"><path d="M17 3a2.85 2.83 0 1 1 4 4L7.5 20.5 2 22l1.5-5.5Z"/></svg>
<svg class="ic" style="left:1490.5px;top:706.6px;width:17px;height:17px;clip-path:inset(-3px 0 -3px -3px);" viewBox="0 0 24 24" fill="none" stroke="#5b8def" stroke-width="1.8" stroke-linecap="round" stroke-linejoin="round"><path d="M17 3a2.85 2.83 0 1 1 4 4L7.5 20.5 2 22l1.5-5.5Z"/></svg>
<svg class="ic" style="left:1549.5px;top:491.7px;width:19px;height:19px;" viewBox="0 0 24 24" fill="none" stroke="#ffffff" stroke-width="2" stroke-linecap="round" stroke-linejoin="round"><circle cx="12" cy="12" r="10"/><polyline points="12 6 12 12 16 14"/></svg>
<svg class="ic" style="left:1557.5px;top:558px;width:16px;height:16px;" viewBox="0 0 24 24" fill="none" stroke="#5b8def" stroke-width="1.9" stroke-linecap="round" stroke-linejoin="round"><path d="M17 3a2.85 2.83 0 1 1 4 4L7.5 20.5 2 22l1.5-5.5Z"/></svg>
<svg class="ic" style="left:1557.5px;top:633px;width:16px;height:16px;" viewBox="0 0 24 24" fill="none" stroke="#5cba72" stroke-width="1.9" stroke-linecap="round" stroke-linejoin="round"><path d="M3 12a9 9 0 0 1 9-9 9.75 9.75 0 0 1 6.74 2.74L21 8"/><path d="M21 3v5h-5"/><path d="M21 12a9 9 0 0 1-9 9 9.75 9.75 0 0 1-6.74-2.74L3 16"/><path d="M8 16H3v5"/></svg>
</body></html>
